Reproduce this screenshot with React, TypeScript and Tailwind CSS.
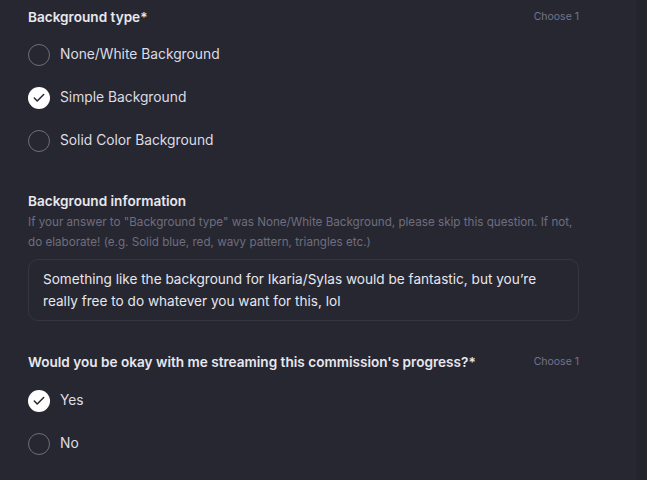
import { Check } from 'lucide-react';

interface Opt {
  label: string;
  checked?: boolean;
}

function Radio({ label, checked }: Opt) {
  return (
    <div className="flex items-center gap-[10px] h-[43px]">
      {checked ? (
        <span className="w-[22px] h-[22px] rounded-full bg-white flex items-center justify-center">
          <Check size={14} strokeWidth={2.6} className="text-[#272732]" />
        </span>
      ) : (
        <span className="w-[22px] h-[22px] rounded-full border border-[#6e6e7a]" />
      )}
      <span className="text-[13.8px] text-[#dcdce2]">{label}</span>
    </div>
  );
}

function Header({ title, choose }: { title: string; choose?: boolean }) {
  return (
    <div className="flex items-center justify-between h-[22px]">
      <h2 className="text-[13.6px] font-semibold text-[#e8e8ee]">{title}</h2>
      {choose && <span className="text-[10.5px] text-[#74748a]">Choose 1</span>}
    </div>
  );
}

export default function App() {
  return (
    <div
      className="flex w-[647px] h-[480px] overflow-hidden bg-[#272732]"
      style={{ fontFamily: 'Inter, "Noto Sans", sans-serif' }}
    >
      <div className="w-[636px] pl-[28px] pr-[57px] pt-[6px]">
        <Header title="Background type*" choose />
        <div className="mt-[5px]">
          <Radio label="None/White Background" />
          <Radio label="Simple Background" checked />
          <Radio label="Solid Color Background" />
        </div>

        <div className="mt-[28px]">
          <Header title="Background information" />
          <p className="text-[11.65px] leading-[20px] text-[#6e6e7c]">
            If your answer to "Background type" was None/White Background, please skip this question. If not,
            do elaborate! (e.g. Solid blue, red, wavy pattern, triangles etc.)
          </p>
          <div className="mt-[7px] rounded-[10px] border border-[#363642] px-[14px] py-[8px] text-[13.6px] leading-[22px] text-[#e6e6ec]">
            Something like the background for Ikaria/Sylas would be fantastic, but you’re really free to do
            whatever you want for this, lol
          </div>
        </div>

        <div className="mt-[30px]">
          <Header title="Would you be okay with me streaming this commission's progress?*" choose />
          <div className="mt-[6px]">
            <Radio label="Yes" checked />
            <Radio label="No" />
          </div>
        </div>
      </div>
      <div className="flex-1 bg-[#24242d]" />
    </div>
  );
}
